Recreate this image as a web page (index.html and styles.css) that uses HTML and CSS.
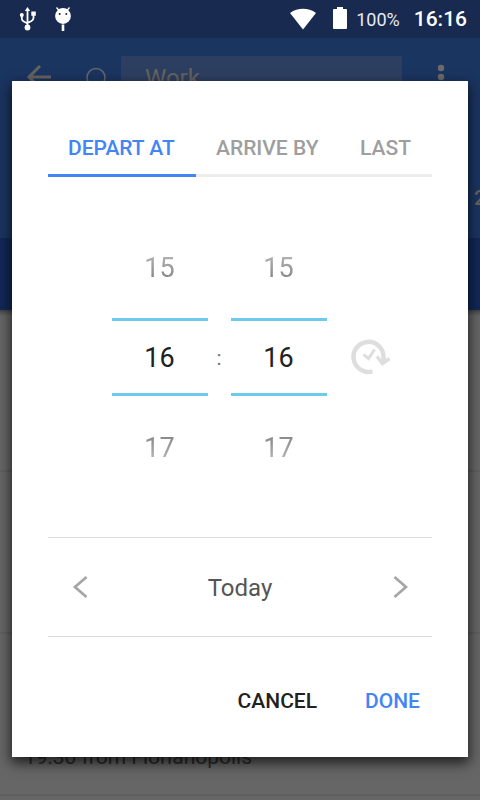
FILE: index.html
```html
<!DOCTYPE html>
<html lang="en">
<head>
<meta charset="utf-8">
<meta name="viewport" content="width=device-width, initial-scale=1">
<title>Departure time</title>
<link rel="stylesheet" href="styles.css">
</head>
<body>
<div class="screen">
  <div class="status-bar">
    <svg class="usb" width="18" height="26" viewBox="0 0 18 26" aria-hidden="true">
      <path d="M8.500 4v18M2.800 10v2.500q0 2 2 3l3.700 2M14.500 8v4q0 2-2 3l-4 2" fill="none" stroke="#fff" stroke-width="1.800"/>
      <path d="M8.500 1l2.700 4H5.800zM12.300 5.500h4.500v4.200h-4.500z" fill="#fff"/>
      <circle cx="2.800" cy="9" r="2" fill="#fff"/><circle cx="8.500" cy="21.500" r="2.900" fill="#fff"/>
    </svg>
    <svg class="robot" width="18" height="26" viewBox="0 0 18 26" aria-hidden="true">
      <circle cx="9" cy="10" r="7.900" fill="#fff"/>
      <path d="M2.500 1.500l2.500 3M15.500 1.500l-2.500 3" stroke="#fff" stroke-width="1.400"/>
      <path d="M7.700 18.500h2.600V25H7.700z" fill="#fff"/>
      <circle cx="5.700" cy="8" r="1" fill="#182a50"/><circle cx="12.300" cy="8" r="1" fill="#182a50"/>
    </svg>
    <svg class="wifi" width="28" height="22" viewBox="0 0 28 22" aria-hidden="true">
      <path d="M1 5Q7 .8 14 .8T27 5L14 21.500z" fill="#fff"/>
    </svg>
    <svg class="battery" width="14" height="24" viewBox="0 0 14 24" aria-hidden="true">
      <path d="M4 0h6v2h3q1 0 1 1v18q0 1-1 1H1q-1 0-1-1V3q0-1 1-1h3z" fill="#fff"/>
    </svg>
    <span class="charge">100%</span>
    <span class="clock">16:16</span>
  </div>
  <header class="app-header">
    <div class="search-row">
      <svg width="26" height="26" viewBox="0 0 26 26" aria-hidden="true"><path d="M25 13H3M14 2L3 13l11 11" fill="none" stroke="#66625f" stroke-width="3"/></svg>
      <svg class="origin" width="20" height="20" viewBox="0 0 20 20" aria-hidden="true"><circle cx="10" cy="10.500" r="9" fill="none" stroke="#66666a" stroke-width="1.500"/></svg>
      <div class="destination">Work</div>
      <svg class="more" width="8" height="28" viewBox="0 0 8 28" aria-hidden="true"><g fill="#6d6b69"><circle cx="4" cy="5" r="3.200"/><circle cx="4" cy="14" r="3.200"/><circle cx="4" cy="23" r="3.200"/></g></svg>
    </div>
    <div class="peek">2</div>
  </header>
  <div class="summary"></div>
  <main class="trips">
    <div class="trip"></div>
    <div class="trip"></div>
    <div class="trip">19:30 from Florianopolis</div>
    <div class="trip"></div>
  </main>
  <div class="overlay">
    <form class="dialog" role="dialog" aria-label="Departure time">
      <div class="tabs" role="tablist">
        <button type="button" class="tab active" role="tab" aria-selected="true">DEPART AT</button>
        <button type="button" class="tab" role="tab" aria-selected="false">ARRIVE BY</button>
        <button type="button" class="tab" role="tab" aria-selected="false">LAST</button>
      </div>
      <div class="time">
        <div class="wheel">
          <button type="button" class="step above">15</button>
          <input class="value" aria-label="Hour" value="16" inputmode="numeric">
          <button type="button" class="step below">17</button>
        </div>
        <span class="colon">:</span>
        <div class="wheel">
          <button type="button" class="step above">15</button>
          <input class="value" aria-label="Minute" value="16" inputmode="numeric">
          <button type="button" class="step below">17</button>
        </div>
        <button type="button" class="now" aria-label="Set to now">
          <svg width="40" height="36" viewBox="0 0 40 36" aria-hidden="true">
            <path d="M21.500 32.300A15 15 0 1 1 32.500 18v5" fill="none" stroke="#dedede" stroke-width="4.500"/>
            <path d="M26 17.500L31.500 24.500 38.500 19.500" fill="none" stroke="#dedede" stroke-width="3.500"/>
            <path d="M12.500 15.500L17.500 19.500 23.500 10.500" fill="none" stroke="#dedede" stroke-width="3"/>
          </svg>
        </button>
      </div>
      <div class="day">
        <button type="button" class="arrow" aria-label="Previous day"><svg width="16" height="24" viewBox="0 0 16 24" aria-hidden="true"><path d="M14.500 2L3 12l11.500 10" fill="none" stroke="#a6a6a6" stroke-width="2.800"/></svg></button>
        <span class="day-name">Today</span>
        <button type="button" class="arrow" aria-label="Next day"><svg width="16" height="24" viewBox="0 0 16 24" aria-hidden="true"><path d="M2.500 2L14 12 2.500 22" fill="none" stroke="#a6a6a6" stroke-width="2.800"/></svg></button>
      </div>
      <div class="actions">
        <button type="button" class="action">CANCEL</button>
        <button type="submit" class="action primary">DONE</button>
      </div>
    </form>
  </div>
</div>
</body>
</html>
```

FILE: styles.css
```css
* { box-sizing: border-box; }
body { margin: 0; font-family: Roboto, "Liberation Sans", sans-serif; background: #666; }
button, input { font: inherit; color: inherit; background: none; border: 0; margin: 0; padding: 0; border-radius: 0; }
button { cursor: pointer; }
svg { display: block; flex: none; }

.screen { position: relative; height: 100vh; overflow: hidden; display: flex; flex-direction: column; }
.status-bar { flex: none; height: 38px; padding: 0 13px 0 19px; display: flex; align-items: center; background: #182a50; color: #fff; }
.robot { margin-left: 17px; }
.wifi { margin-left: auto; }
.battery { margin-left: 16px; }
.charge { margin-left: 9px; font-size: 18px; color: #e8eaee; }
.clock { margin-left: 14px; font-size: 21px; font-weight: 500; }

.app-header { flex: none; height: 200px; padding-top: 18px; background: #1b3561; color: #66625f; }
.search-row { display: flex; align-items: center; height: 42px; padding: 0 35px 0 26px; }
.origin { margin-left: 34px; }
.destination { flex: 1; height: 42px; margin-left: 15px; padding-left: 24px; font-size: 24px; line-height: 44px; background: #2d3f61; }
.more { margin-left: 35px; }
.peek { width: 6px; margin: 88px 0 0 auto; overflow: hidden; font-size: 21px; line-height: 24px; font-weight: 500; }
.summary { flex: none; height: 72px; background: #132856; }
.trips { background: linear-gradient(#444, #666 6px); }
.trip { display: flex; align-items: flex-end; height: 162px; padding: 0 24px 23px; border-bottom: 2px solid #5f5f5f; font-size: 21px; line-height: 28px; color: #2c2c2c; }

.overlay { position: absolute; inset: 0; display: grid; align-items: start; padding: 81px 12px 0; }
.dialog { padding: 36px 36px 32px; background: #fff; box-shadow: 0 5px 12px 1px rgba(0, 0, 0, .7); }
.tabs { display: grid; grid-template-columns: 148px 144px 1fr; height: 60px; font-size: 21px; font-weight: 500; color: #9e9e9e; }
.tab { padding: 4px 0 0 20px; border-bottom: 3px solid #ededed; text-align: left; white-space: nowrap; }
.tab.active { color: #4285f4; border-color: #4285f4; }

.time { display: flex; justify-content: center; align-items: center; height: 360px; padding-left: 22px; }
.wheel { display: grid; grid-template-rows: 102px 78px 102px; width: 96px; font-size: 27px; }
.step { width: 96px; padding-top: 2px; color: #808080; }
.above { -webkit-mask-image: linear-gradient(transparent 0, #000 65%); mask-image: linear-gradient(transparent 0, #000 65%); }
.below { -webkit-mask-image: linear-gradient(#000 35%, transparent 100%); mask-image: linear-gradient(#000 35%, transparent 100%); }
.value { width: 96px; padding-top: 2px; text-align: center; color: #212121; border: solid #6dcaec; border-width: 3px 0; }
.colon { width: 23px; padding-top: 2px; text-align: center; font-size: 21px; color: #757575; }
.now { margin-left: 24px; }

.day { display: flex; justify-content: space-between; align-items: center; height: 100px; padding: 0 24px; border: solid #dcdcdc; border-width: 1px 0; font-size: 24px; color: #555; }
.day-name { padding-top: 2px; }
.actions { display: flex; justify-content: flex-end; gap: 48px; padding: 40px 12px 0; font-size: 21px; font-weight: 500; color: #212121; }
.action { height: 48px; }
.primary { color: #4285f4; }
```
